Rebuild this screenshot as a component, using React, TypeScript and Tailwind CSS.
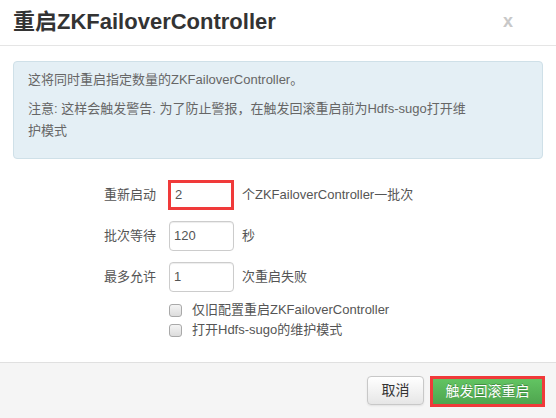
import React from "react";

const font = { fontFamily: '"Liberation Sans", Arial, "Noto Sans CJK SC", sans-serif' };

function Row({ label, value, suffix, highlight }: { label: string; value: string; suffix: string; highlight?: boolean }) {
  return (
    <div className="flex items-center h-[30px]">
      <div className="w-[145px] text-right pr-[2px] text-[13px] text-[#555]">{label}</div>
      <div className="w-[10px]" />
      {highlight ? (
        <div className="w-[66px] h-[30px] border-[3px] border-[#f03a3a] bg-white flex items-center pl-[4px] text-[13px] text-[#555]">{value}</div>
      ) : (
        <div className="ml-[1px] w-[65px] h-[30px] border border-[#ccc] rounded-[4px] bg-white flex items-center pl-[4px] text-[13px] text-[#555] shadow-[inset_0_1px_1px_rgba(0,0,0,0.075)]">{value}</div>
      )}
      <div className="ml-[8px] text-[13px] text-[#555]">{suffix}</div>
    </div>
  );
}

function Check({ label }: { label: string }) {
  return (
    <div className="flex items-center h-[20px]">
      <div className="w-[13px] h-[13px] rounded-[3px] border border-[#a9a9a9] bg-gradient-to-b from-[#f4f4f4] to-[#dcdcdc]" />
      <div className="ml-[10px] text-[13px] text-[#555]">{label}</div>
    </div>
  );
}

export default function App() {
  return (
    <div className="w-[556px] h-[418px] bg-white flex flex-col overflow-hidden" style={font}>
      <div className="h-[46px] border-b border-[#e5e5e5] flex items-center justify-between pl-[13px] pr-[43px] shrink-0">
        <div className="text-[22px] font-bold text-[#333] leading-none pb-[1px]">重启ZKFailoverController</div>
        <div className="text-[18px] font-bold text-[#c8c8c8] leading-none -mt-[4px]">x</div>
      </div>
      <div className="px-[13px] pt-[15px] flex-1">
        <div className="border border-[#cfe0e8] bg-[#e4eff5] rounded-[4px] pl-[14px] pr-[35px] pt-[7px] pb-[9px] text-[13px] leading-[22px] text-[#666]">
          <p className="mb-[7px]">这将同时重启指定数量的ZKFailoverController。</p>
          <p className="mb-[7px]">注意: 这样会触发警告. 为了防止警报，在触发回滚重启前为Hdfs-sugo打开维<br />护模式</p>
        </div>
        <div className="mt-[21px] flex flex-col gap-[11px]">
          <Row label="重新启动" value="2" suffix="个ZKFailoverController一批次" highlight />
          <Row label="批次等待" value="120" suffix="秒" />
          <Row label="最多允许" value="1" suffix="次重启失败" />
        </div>
        <div className="mt-[8px] ml-[156px] flex flex-col">
          <Check label="仅旧配置重启ZKFailoverController" />
          <Check label="打开Hdfs-sugo的维护模式" />
        </div>
      </div>
      <div className="h-[56px] shrink-0 border-t border-[#e0e0e0] bg-[#f5f5f5] flex items-start justify-end pt-[13px] pr-[11px] gap-[6px]">
        <div className="w-[57px] h-[29px] border border-[#c8c8c8] rounded-[4px] bg-gradient-to-b from-white to-[#e6e6e6] flex items-center justify-center text-[14px] text-[#333] shadow-[0_1px_2px_rgba(0,0,0,0.08)]">取消</div>
        <div className="w-[115px] h-[31px] border-[3px] border-[#f03a3a] bg-gradient-to-b from-[#62c462] to-[#4fa54f] flex items-center justify-center text-[14px] text-white [text-shadow:0_-1px_0_rgba(0,0,0,0.25)]">触发回滚重启</div>
      </div>
    </div>
  );
}
